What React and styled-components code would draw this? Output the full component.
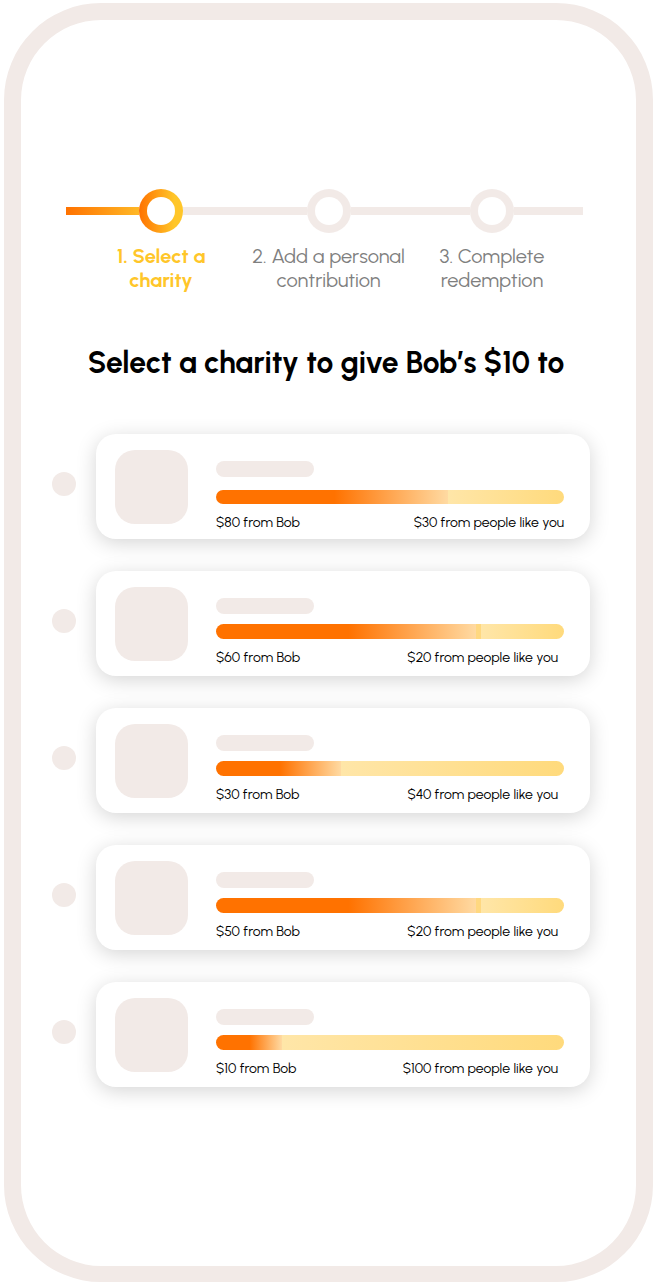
import React, { useState } from "react";
import styled, { createGlobalStyle } from "styled-components";

const sand = "#f2eae7";
const orange = "#ff7200";
const amber = "#ffc629";

const GlobalStyle = createGlobalStyle`
  *, *::before, *::after { box-sizing: border-box; }
  body {
    margin: 0;
    padding: 3px 3px 4px 4px;
    background: #fff;
    color: #000;
    font-family: Urbanist, Lato, "Liberation Sans", sans-serif;
  }
`;

const Phone = styled.main`
  min-height: calc(100vh - 7px);
  border: 17px solid ${sand};
  border-bottom-width: 16px;
  border-radius: 97px;
  background: #fff;
  padding: 169px 36px 170px 31px;
`;

const Stepper = styled.ol`
  display: grid;
  grid-template-columns: minmax(0, 190fr) minmax(0, 145fr) minmax(0, 182fr);
  list-style: none;
  margin: 0 17px 0 14px;
  padding: 0;
`;

const Step = styled.li`
  display: flex;
  flex-direction: column;
  align-items: center;
  gap: 11px;
`;

const Marker = styled.div`
  display: flex;
  align-items: center;
  align-self: stretch;
`;

const Track = styled.span`
  flex: 1;
  height: 8px;
  background: ${(p) => (p.$active ? `linear-gradient(90deg, ${orange}, #ffb826)` : sand)};
`;

const Ring = styled.span`
  width: 44px;
  height: 44px;
  border: 8px solid transparent;
  border-radius: 50%;
  background:
    linear-gradient(#fff, #fff) padding-box,
    ${(p) => (p.$active ? `linear-gradient(90deg, ${orange}, ${amber} 80%)` : `linear-gradient(${sand}, ${sand})`)} border-box;
`;

const StepLabel = styled.span`
  font-size: 20px;
  line-height: 24px;
  font-weight: ${(p) => (p.$active ? 700 : 400)};
  color: ${(p) => (p.$active ? amber : "#7f7f7f")};
  text-align: center;
  white-space: nowrap;
`;

const Title = styled.h1`
  margin: 51px 0 0;
  font-size: 30px;
  line-height: 40px;
  font-weight: 700;
  text-align: center;
`;

const Options = styled.form`
  display: flex;
  flex-direction: column;
  gap: 32px;
  margin: 51px 10px 0 0;
`;

const Option = styled.label`
  display: flex;
  gap: 20px;
  cursor: pointer;
`;

const Radio = styled.input`
  appearance: none;
  flex: none;
  width: 24px;
  height: 24px;
  margin: 38px 0 0;
  border-radius: 50%;
  background: ${sand};
  &:checked { background: ${orange}; }
`;

const Card = styled.span`
  flex: 1;
  display: flex;
  gap: 28px;
  padding: 16px 26px 6px 19px;
  min-height: 105px;
  border-radius: 20px;
  background: #fff;
  box-shadow: 0 4px 20px rgba(0, 0, 0, 0.17);
`;

const Thumb = styled.span`
  flex: none;
  width: 73px;
  height: 74px;
  border-radius: 20px;
  background: ${sand};
`;

const Details = styled.span`
  flex: 1;
  display: flex;
  flex-direction: column;
  padding-top: 11px;
`;

const NamePlaceholder = styled.span`
  width: 98px;
  height: 16px;
  border-radius: 8px;
  background: ${sand};
`;

const Bar = styled.span`
  display: flex;
  height: ${(p) => (p.$roomy ? 14 : 15)}px;
  margin-top: ${(p) => (p.$roomy ? 13 : 10)}px;
  border-radius: 8px;
  overflow: hidden;
`;

const OwnShare = styled.span`
  background: linear-gradient(90deg, ${orange} 51%, #ffdaa2);
`;

const Seam = styled.span`
  width: 5px;
  background: #ffd880;
`;

const OthersShare = styled.span`
  flex: 1;
  background: linear-gradient(90deg, #ffe6a8, #ffda7c);
`;

const Amounts = styled.span`
  display: flex;
  justify-content: space-between;
  margin-top: 9px;
  padding-right: ${(p) => (p.$roomy ? 0 : 6)}px;
  font-size: 14px;
  line-height: 20px;
  white-space: nowrap;
`;

const steps = [
  ["1. Select a", "charity"],
  ["2. Add a personal", "contribution"],
  ["3. Complete", "redemption"],
];

const charities = [
  { own: 80, others: 30, share: 66.8, roomy: true },
  { own: 60, others: 20, share: 74.8, seam: true },
  { own: 30, others: 40, share: 36 },
  { own: 50, others: 20, share: 74.8, seam: true },
  { own: 10, others: 100, share: 19 },
];

export default function App() {
  const [picked, setPicked] = useState(null);
  return (
    <>
      <GlobalStyle />
      <Phone>
        <Stepper>
          {steps.map(([first, second], i) => (
            <Step key={first} aria-current={i === 0 ? "step" : undefined}>
              <Marker>
                <Track $active={i === 0} />
                <Ring $active={i === 0} />
                <Track />
              </Marker>
              <StepLabel $active={i === 0}>
                {first}
                <br />
                {second}
              </StepLabel>
            </Step>
          ))}
        </Stepper>
        <Title>Select a charity to give Bob’s $10 to</Title>
        <Options>
          {charities.map((c, i) => (
            <Option key={i}>
              <Radio type="radio" name="charity" checked={picked === i} onChange={() => setPicked(i)} />
              <Card>
                <Thumb />
                <Details>
                  <NamePlaceholder />
                  <Bar $roomy={c.roomy}>
                    <OwnShare style={{ width: `${c.share}%` }} />
                    {c.seam && <Seam />}
                    <OthersShare />
                  </Bar>
                  <Amounts $roomy={c.roomy}>
                    <span>${c.own} from Bob</span>
                    <span>${c.others} from people like you</span>
                  </Amounts>
                </Details>
              </Card>
            </Option>
          ))}
        </Options>
      </Phone>
    </>
  );
}
